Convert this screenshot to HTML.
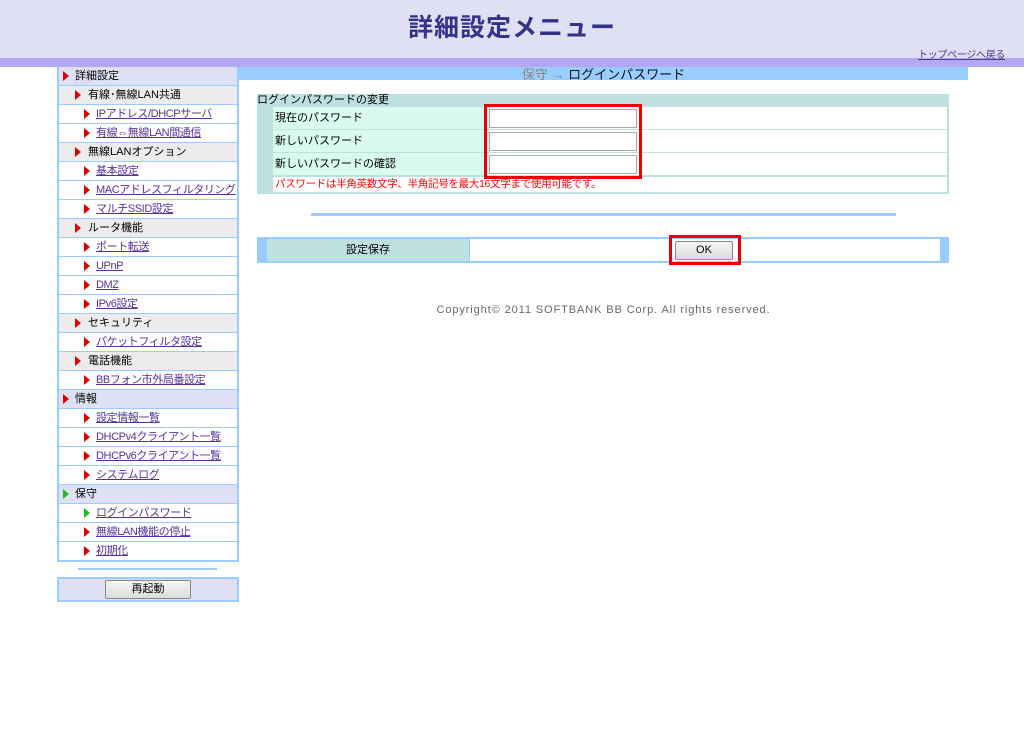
<!DOCTYPE html>
<html><head><meta charset="utf-8"><style>
*{margin:0;padding:0;box-sizing:border-box}
body{width:1024px;height:739px;background:#fff;font-family:"Liberation Sans","Noto Sans CJK JP",sans-serif;font-size:11px;color:#000;position:relative;overflow:hidden}
.hd{position:absolute;left:0;top:0;width:1024px;height:59px;background:#dfe0f4}
.band{position:absolute;left:0;top:58px;width:1024px;height:9px;background:#b4a8f2}
.title{position:absolute;left:0;width:1024px;top:8px;text-align:center;font-size:25px;font-weight:bold;color:#333388;letter-spacing:1px}
.top{position:absolute;left:918px;top:46px;color:#553399;text-decoration:underline;font-size:10px;letter-spacing:-0.3px;white-space:nowrap}
.side{position:absolute;left:57px;top:67px;width:182px;border:2px solid #99ccff;border-top:none;background:#99ccff}
.r{height:18px;margin-bottom:1px;position:relative;line-height:18px;font-size:11px;background:#fff;white-space:nowrap;overflow:hidden}
.r:last-child{margin-bottom:0}
.l1{background:#dfe0f4}.l2{background:#ececec}
.r:before{content:"";position:absolute;top:4px;border-left:6px solid #e00000;border-top:5px solid transparent;border-bottom:5px solid transparent}
.l1:before{left:4px}.l1 span{margin-left:16px}
.l2:before{left:16px}.l2 span{margin-left:29px}
.lk:before{left:25px}.lk span{margin-left:37px;color:#553399;text-decoration:underline;letter-spacing:-0.4px}
.g:before{border-left-color:#22bb22}
.main{position:absolute;left:239px;top:67px;width:729px;height:13px;background:#99ccff}
.mt{position:absolute;left:239px;top:64px;width:729px;text-align:center;font-size:13px;color:#111}
.mt b{color:#888;font-weight:normal}
.tbl{position:absolute;left:257px;top:94px;width:692px;height:100px;background:#bfe0e0}
.cell{position:absolute;font-size:11px}
.lab{background:#d9fbef;left:16px;width:211px;height:22px;line-height:22px;padding-left:2px}
.val{background:#fff;left:228px;width:462px;height:22px}
.inp{position:absolute;left:232px;width:148px;height:19px;border:1px solid #aaa;background:#fff}
.red{position:absolute;border:3px solid #ee0000}
</style></head><body>
<div class="hd"></div><div class="band"></div>
<div class="title">詳細設定メニュー</div>
<div class="top">トップページへ戻る</div>
<div class="side">
<div class="r l1"><span>詳細設定</span></div>
<div class="r l2"><span>有線･無線LAN共通</span></div>
<div class="r lk"><span>IPアドレス/DHCPサーバ</span></div>
<div class="r lk"><span>有線⇔無線LAN間通信</span></div>
<div class="r l2"><span>無線LANオプション</span></div>
<div class="r lk"><span>基本設定</span></div>
<div class="r lk"><span>MACアドレスフィルタリング</span></div>
<div class="r lk"><span>マルチSSID設定</span></div>
<div class="r l2"><span>ルータ機能</span></div>
<div class="r lk"><span>ポート転送</span></div>
<div class="r lk"><span>UPnP</span></div>
<div class="r lk"><span>DMZ</span></div>
<div class="r lk"><span>IPv6設定</span></div>
<div class="r l2"><span>セキュリティ</span></div>
<div class="r lk"><span>パケットフィルタ設定</span></div>
<div class="r l2"><span>電話機能</span></div>
<div class="r lk"><span>BBフォン市外局番設定</span></div>
<div class="r l1"><span>情報</span></div>
<div class="r lk"><span>設定情報一覧</span></div>
<div class="r lk"><span>DHCPv4クライアント一覧</span></div>
<div class="r lk"><span>DHCPv6クライアント一覧</span></div>
<div class="r lk"><span>システムログ</span></div>
<div class="r l1 g"><span>保守</span></div>
<div class="r lk g"><span>ログインパスワード</span></div>
<div class="r lk"><span>無線LAN機能の停止</span></div>
<div class="r lk"><span>初期化</span></div>
</div>
<div style="position:absolute;left:78px;top:568px;width:139px;height:2px;background:#99ccff"></div>
<div style="position:absolute;left:57px;top:577px;width:182px;height:25px;background:#dfe0f4;border:2px solid #99ccff"></div>
<div style="position:absolute;left:105px;top:580px;width:86px;height:19px;border:1px solid #888;border-radius:2px;background:linear-gradient(#f6f6f6,#dcdcdc);text-align:center;line-height:17px;font-size:11px">再起動</div>
<div class="main"></div>
<div class="mt"><b>保守 → </b> ログインパスワード</div>
<div class="tbl">
<div class="cell" style="left:0;top:0;line-height:12px">ログインパスワードの変更</div>
<div class="cell lab" style="top:13px">現在のパスワード</div><div class="cell val" style="top:13px"></div>
<div class="cell lab" style="top:36px">新しいパスワード</div><div class="cell val" style="top:36px"></div>
<div class="cell lab" style="top:59px">新しいパスワードの確認</div><div class="cell val" style="top:59px"></div>
<div class="cell" style="left:16px;top:83px;width:674px;height:15px;background:#fff;color:#ff0000;padding-left:2px;line-height:15px;font-size:10.5px;letter-spacing:-0.3px;white-space:nowrap">パスワードは半角英数文字、半角記号を最大16文字まで使用可能です。</div>
<div class="inp" style="top:15px"></div><div class="inp" style="top:38px"></div><div class="inp" style="top:61px"></div>
</div>
<div class="red" style="left:484px;top:104px;width:158px;height:75px"></div>
<div style="position:absolute;left:311px;top:213px;width:585px;height:3px;background:#99ccff"></div>
<div style="position:absolute;left:257px;top:237px;width:692px;height:26px;background:#99ccff">
<div style="position:absolute;left:10px;top:2px;width:202px;height:22px;background:#bfe0e0;text-align:center;line-height:22px">設定保存</div>
<div style="position:absolute;left:213px;top:2px;width:470px;height:22px;background:#fff"></div>
</div>
<div style="position:absolute;left:675px;top:241px;width:58px;height:19px;border:1px solid #888;border-radius:2px;background:linear-gradient(#f6f6f6,#dcdcdc);text-align:center;line-height:17px;font-size:11px">OK</div>
<div class="red" style="left:669px;top:235px;width:72px;height:30px"></div>
<div style="position:absolute;left:239px;width:729px;top:304px;text-align:center;color:#666;font-size:11px;letter-spacing:0.9px">Copyright© 2011 SOFTBANK BB Corp. All rights reserved.</div>
</body></html>
